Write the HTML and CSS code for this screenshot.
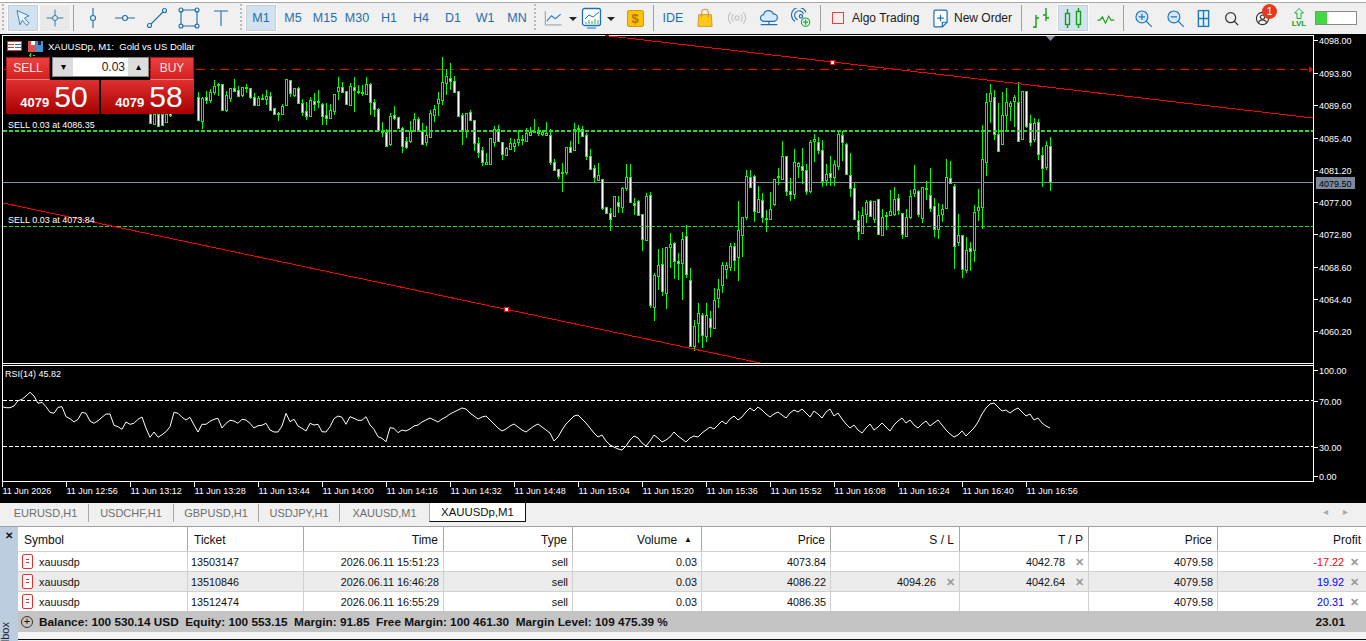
FILE: index.html
```html
<!DOCTYPE html>
<html lang="en">

<head>
    <meta charset="UTF-8">
    <title>XAUUSDp,M1 - MetaTrader 5</title>
    <link rel="stylesheet" href="styles.css">
</head>

<body>
    <!-- Top toolbar -->
    <div class="toolbar">
        <div class="grip grip-first"></div>
        <div class="tool on"><svg width="18" height="18" viewBox="0 0 24 24" class="ic"><path d="M4 2l16 7-6 3 6 7-3 3-6-7-3 6z" fill="#eaf2fa"/></svg></div>
        <div class="tool soft"><svg width="20" height="20" viewBox="0 0 24 24" class="ic"><path d="M12 2v7M12 15v7M2 12h7M15 12h7"/><circle cx="12" cy="12" r="3"/></svg></div>
        <div class="sep"></div>
        <div class="tool"><svg width="24" height="24" viewBox="0 0 24 24" class="ic"><path d="M12 2v7M12 15v7"/><circle cx="12" cy="12" r="2.5"/></svg></div>
        <div class="tool"><svg width="24" height="24" viewBox="0 0 24 24" class="ic"><path d="M2 12h7M15 12h7"/><circle cx="12" cy="12" r="2.5"/></svg></div>
        <div class="tool"><svg width="24" height="24" viewBox="0 0 24 24" class="ic"><path d="M6 18L18 6"/><circle cx="4.5" cy="19.500" r="2"/><circle cx="19.500" cy="4.500" r="2"/></svg></div>
        <div class="tool"><svg width="24" height="24" viewBox="0 0 24 24" class="ic"><path d="M5 4h14M5 20h14M4 5v14M20 5v14"/><circle cx="4" cy="4" r="2"/><circle cx="20" cy="4" r="2"/><circle cx="4" cy="20" r="2"/><circle cx="20" cy="20" r="2"/></svg></div>
        <div class="tool"><svg width="24" height="24" viewBox="0 0 24 24" class="ic"><path d="M5 5h14M12 5v15"/></svg></div>
        <div class="grip"></div>
        <div class="tool tf on">M1</div>
        <div class="tool tf">M5</div>
        <div class="tool tf">M15</div>
        <div class="tool tf">M30</div>
        <div class="tool tf">H1</div>
        <div class="tool tf">H4</div>
        <div class="tool tf">D1</div>
        <div class="tool tf">W1</div>
        <div class="tool tf">MN</div>
        <div class="grip grip-tf"></div>
        <div class="tool"><svg width="20" height="20" viewBox="0 0 26 24" fill="none"><path d="M3 3v18h21" stroke="#8d9aa8" stroke-width="1.300"/><path d="M5 16l6-7 5 4 7-6" stroke="#2f7fc0" stroke-width="1.500"/></svg></div>
        <div class="caret"></div>
        <div class="tool tool-narrow"><svg width="24" height="24" viewBox="0 0 24 24" fill="none"><rect x="2.500" y="2.500" width="18" height="17" rx="2" stroke="#1f6fb0" stroke-width="1.300" fill="#fff"/><path d="M5 13l4-4 4 2 6-5" stroke="#1f6fb0"/><path d="M6 16v2M9 14v4M12 15v3M15 13v5M18 14v4" stroke="#22b14c"/><path d="M7 22h9" stroke="#1f6fb0"/></svg></div>
        <div class="caret"></div>
        <div class="tool tool-gold"><div class="coin">$</div></div>
        <div class="sep"></div>
        <div class="tool tf">IDE</div>
        <div class="tool"><svg width="20" height="20" viewBox="0 0 24 24"><path d="M4.500 8h15l1 14h-17z" fill="#ffc916" stroke="#d9952a" stroke-width="1.200"/><path d="M8 11V5.500a4 4 0 0 1 8 0V11" fill="none" stroke="#d9952a" stroke-width="1.300"/></svg></div>
        <div class="tool"><svg width="20" height="20" viewBox="0 0 24 24" fill="none" stroke="#c4c4c4" stroke-width="1.400"><circle cx="12" cy="12" r="2.500"/><path d="M7.500 7.500a6.500 6.500 0 0 0 0 9M16.500 7.500a6.500 6.500 0 0 1 0 9M4.500 5a10 10 0 0 0 0 14M19.500 5a10 10 0 0 1 0 14"/></svg></div>
        <div class="tool"><svg width="20" height="20" viewBox="0 0 24 24" fill="#d6e9f8" stroke="#1f6fb0" stroke-width="1.400"><path d="M6 16a4 4 0 0 1-.5-8 6 6 0 0 1 11.500-1 4.500 4.500 0 0 1 1 9z"/><path d="M12 16v4M2 20h20" fill="none"/></svg></div>
        <div class="tool"><svg width="20" height="20" viewBox="0 0 24 24" fill="none" stroke="#1f6fb0" stroke-width="1.400"><path d="M5 16a9 9 0 1 1 13-11"/><path d="M8 14a5.500 5.500 0 1 1 7-7"/><circle cx="12" cy="10" r="2"/><circle cx="17.500" cy="17" r="5" fill="#e4f7e8" stroke="#1fa64a"/><path d="M17.500 14v6M14.500 17h6" stroke="#1fa64a"/></svg></div>
        <div class="sep sep-algo"></div>
        <div class="tb-label algo"><span class="algo-box"></span>Algo Trading</div>
        <div class="tb-label order"><svg width="15" height="19" viewBox="0 0 16 20" fill="#fff" stroke="#1f6fb0" stroke-width="1.300"><path d="M2.500 1h11a1.500 1.500 0 0 1 1.500 1.500V14l-5 5H2.500A1.500 1.500 0 0 1 1 17.500v-15A1.500 1.500 0 0 1 2.500 1z"/><path d="M8 6v7M4.500 9.500h7M10 19v-5h5" fill="none"/></svg>New Order</div>
        <div class="sep"></div>
        <div class="tool"><svg width="24" height="24" viewBox="0 0 24 24" class="ic-green"><path d="M7 9v13M4 21h3M7 12h3M17 2v13M14 9h3M17 12h3"/></svg></div>
        <div class="tool on"><svg width="24" height="24" viewBox="0 0 24 24" class="ic-green"><rect x="4.500" y="7.500" width="4" height="11"/><rect x="15.500" y="5.500" width="4" height="13"/><path d="M6.500 3v4M6.500 18v4M17.500 2v3M17.500 18v4"/></svg></div>
        <div class="tool"><svg width="19" height="19" viewBox="0 0 24 24" class="ic-green"><path d="M2 14h3l3-4 4 8 4-9 3 5h4"/></svg></div>
        <div class="sep"></div>
        <div class="tool"><svg width="19" height="19" viewBox="0 0 24 24" class="ic ic-lens"><circle cx="10" cy="10" r="7.500" fill="#d6e9f8"/><path d="M15.500 15.500l7 7M10 6v8M6 10h8"/></svg></div>
        <div class="tool"><svg width="19" height="19" viewBox="0 0 24 24" class="ic ic-lens"><circle cx="10" cy="10" r="7.500" fill="#d6e9f8"/><path d="M15.500 15.500l7 7M6 10h8"/></svg></div>
        <div class="tool tool-tile"><svg width="13" height="19" viewBox="0 0 14 20" class="ic ic-lens"><rect x="1.500" y="1.500" width="11" height="17" fill="#eaf2fa"/><path d="M7 2v16M2 10h10"/></svg></div>
        <div class="tool"><svg width="15" height="15" viewBox="0 0 18 18" fill="none" stroke="#333" stroke-width="1.500"><circle cx="8" cy="8" r="6"/><path d="M12 12l5 5"/></svg></div>
        <div class="tool tool-user"><svg width="15" height="15" viewBox="0 0 16 16" fill="none" stroke="#333" stroke-width="1.200"><circle cx="8" cy="8" r="6.500"/><circle cx="8" cy="6.500" r="2.300"/><path d="M3.500 13c.8-2.500 2.500-3.500 4.500-3.500s3.700 1 4.500 3.500"/></svg><span class="badge">1</span></div>
        <div class="tool lvl"><svg width="10" height="11" viewBox="0 0 10 11"><path d="M5 .5L9.500 5H7v5.500H3V5H.5z" fill="#eafbe8" stroke="#1fa64a"/></svg><span>LVL</span></div>
        <div class="meter"><div class="meter-fill"></div></div>
    </div>

    <!-- Chart, drawn by chart.js -->
    <div class="chart">
        <svg id="chartSvg" class="chart-svg" width="1366" height="469" viewBox="0 34 1366 469"></svg>

        <div class="one-click">
            <div class="oc-top">
                <div class="oc-btn">SELL</div>
                <div class="oc-lot">
                    <div class="oc-step">&#9662;</div>
                    <div class="oc-value">0.03</div>
                    <div class="oc-step">&#9652;</div>
                </div>
                <div class="oc-btn oc-buy">BUY</div>
            </div>
            <div class="oc-prices">
                <div class="oc-price"><span class="oc-big">4079</span><span class="oc-huge">50</span></div>
                <div class="oc-price"><span class="oc-big">4079</span><span class="oc-huge">58</span></div>
            </div>
        </div>
    </div>

    <!-- Chart tabs -->
    <div class="tabs">
        <div class="tab tab-first">EURUSD,H1</div>
        <div class="tab">USDCHF,H1</div>
        <div class="tab">GBPUSD,H1</div>
        <div class="tab tab-jpy">USDJPY,H1</div>
        <div class="tab tab-last">XAUUSD,M1</div>
        <div class="tab active">XAUUSDp,M1</div>
        <div class="tab-arrows"><span>&#9666;</span><span>&#9656;</span></div>
    </div>

    <!-- Toolbox -->
    <div class="toolbox">
        <div class="side">
            <div class="side-x">&#10005;</div>
            <div class="side-name">Toolbox</div>
        </div>
        <div class="trade">
            <table class="orders">
                <colgroup>
                    <col class="c-symbol"><col class="c-ticket"><col class="c-time"><col class="c-num"><col class="c-num"><col class="c-num"><col class="c-num"><col class="c-num"><col class="c-num"><col>
                </colgroup>
                <thead>
                    <tr>
                        <th class="left">Symbol</th>
                        <th class="left">Ticket</th>
                        <th>Time</th>
                        <th>Type</th>
                        <th class="vol">Volume<span class="sort">&#9650;</span></th>
                        <th>Price</th>
                        <th>S / L</th>
                        <th>T / P</th>
                        <th>Price</th>
                        <th>Profit</th>
                    </tr>
                </thead>
                <tbody>
                    <tr>
                        <td class="sym"><span class="doc"></span>xauusdp</td>
                        <td class="left">13503147</td>
                        <td>2026.06.11 15:51:23</td>
                        <td>sell</td>
                        <td>0.03</td>
                        <td>4073.84</td>
                        <td></td>
                        <td class="has-x">4042.78<span class="x">&#10005;</span></td>
                        <td>4079.58</td>
                        <td class="has-x loss">-17.22<span class="x">&#10005;</span></td>
                    </tr>
                    <tr class="alt">
                        <td class="sym"><span class="doc"></span>xauusdp</td>
                        <td class="left">13510846</td>
                        <td>2026.06.11 16:46:28</td>
                        <td>sell</td>
                        <td>0.03</td>
                        <td>4086.22</td>
                        <td class="has-x">4094.26<span class="x">&#10005;</span></td>
                        <td class="has-x">4042.64<span class="x">&#10005;</span></td>
                        <td>4079.58</td>
                        <td class="has-x gain">19.92<span class="x">&#10005;</span></td>
                    </tr>
                    <tr>
                        <td class="sym"><span class="doc"></span>xauusdp</td>
                        <td class="left">13512474</td>
                        <td>2026.06.11 16:55:29</td>
                        <td>sell</td>
                        <td>0.03</td>
                        <td>4086.35</td>
                        <td></td>
                        <td></td>
                        <td>4079.58</td>
                        <td class="has-x gain">20.31<span class="x">&#10005;</span></td>
                    </tr>
                </tbody>
            </table>
            <div class="summary">
                <span class="plus">+</span>
                <span class="summary-text">Balance: 100 530.14 USD&nbsp; Equity: 100 553.15&nbsp; Margin: 91.85&nbsp; Free Margin: 100 461.30&nbsp; Margin Level: 109 475.39 %</span>
                <span class="summary-total">23.01</span>
            </div>
        </div>
    </div>

    <script src="chart.js"></script>
</body>

</html>
```

FILE: styles.css
```css
* {
    margin: 0;
    padding: 0;
    box-sizing: border-box;
    font-family: 'Liberation Sans', Arial, sans-serif;
}

body {
    width: 1366px;
    height: 641px;
    overflow: hidden;
    background: #f0f0f0;
}

.toolbar {
    display: flex;
    align-items: center;
    height: 34px;
    padding: 3px 0 1px 2px;
    background: linear-gradient(#fff 0, #fff 2px, #a8a8a8 2px, #a8a8a8 3px, #f0f0f0 3px);
}

.tool {
    display: flex;
    align-items: center;
    justify-content: center;
    flex: none;
    width: 32px;
    height: 28px;
}

.tool.on {
    background: #d2e2f1;
    border: 1px solid #fff;
    outline: 1px solid #c6ced6;
    outline-offset: -2px;
}

.tool.soft {
    background: #e9e9e9;
    border: 1px solid #f7f7f7;
}

.tool-narrow {
    width: 30px;
}

.tool-gold {
    margin-left: 4px;
}

.tool-tile {
    width: 24px;
}

.tool-user {
    position: relative;
    margin-left: -1px;
}

.ic {
    fill: none;
    stroke: #1f6fa8;
    stroke-width: 1.100;
}

.ic-lens {
    stroke: #1f78b8;
    stroke-width: 1.500;
}

.ic-green {
    fill: none;
    stroke: #12a012;
    stroke-width: 1.400;
}

.tf {
    font-size: 12.500px;
    color: #1f6fa8;
}

.sep {
    flex: none;
    width: 1px;
    height: 26px;
    margin: 0 3px 0 2px;
    background: #a0a0a0;
}

.sep-algo {
    margin: 0 11px 0 3px;
}

.grip {
    flex: none;
    width: 2px;
    height: 28px;
    margin: 0 3px;
    background: repeating-linear-gradient(#bbb 0, #bbb 2px, transparent 2px, transparent 4px);
}

.grip-first {
    margin: 0 3px 0 0;
}

.grip-tf {
    margin: 0 1px 0 1px;
}

.caret {
    flex: none;
    width: 0;
    height: 0;
    margin: 2px 0 0 0;
    border-left: 4px solid transparent;
    border-right: 4px solid transparent;
    border-top: 4px solid #222;
}

.caret + .tool-narrow {
    margin-left: 0;
}

.coin {
    width: 17px;
    height: 17px;
    border: 1px solid #d79a00;
    border-radius: 2px;
    background: #ffc107;
    color: #a87400;
    font-size: 13px;
    font-weight: bold;
    line-height: 15px;
    text-align: center;
}

.tb-label {
    display: flex;
    align-items: center;
    flex: none;
    font-size: 12px;
    color: #1a1a1a;
}

.algo {
    gap: 8px;
    width: 101px;
}

.algo-box {
    width: 12px;
    height: 12px;
    border: 1px solid #d84a4a;
    background: #fdeaea;
}

.order {
    gap: 6px;
    width: 86px;
}

.badge {
    position: absolute;
    left: 16px;
    top: 0;
    width: 15px;
    height: 15px;
    border-radius: 50%;
    background: #e8391f;
    color: #fff;
    font-size: 11px;
    line-height: 15px;
    text-align: center;
}

.lvl {
    flex-direction: column;
    margin-left: 5px;
    color: #12a012;
    font-size: 8px;
    font-weight: bold;
    line-height: 9px;
}

.meter {
    flex: none;
    width: 42px;
    height: 14px;
    border: 1px solid #8a8a8a;
    background: #fff;
}

.meter-fill {
    width: 11px;
    height: 100%;
    background: #41d841;
}

.chart {
    position: relative;
    height: 469px;
    background: #000;
}

.chart-svg {
    display: block;
}

.chart-svg text {
    font-size: 9px;
    fill: #fff;
}

.chart-svg .chart-title {
    font-size: 9.500px;
}

.one-click {
    position: absolute;
    left: 6px;
    top: 23px;
    width: 188px;
}

.oc-top {
    display: flex;
    align-items: flex-start;
    height: 23px;
}

.oc-btn {
    width: 44px;
    height: 23px;
    border: 1px solid #b01010;
    border-bottom: 1px solid #f08080;
    background: linear-gradient(#ec4040, #d62020);
    color: #ffe6e6;
    font-size: 12px;
    line-height: 21px;
    text-align: center;
}

.oc-buy {
    width: 44px;
}

.oc-lot {
    display: flex;
    width: 97px;
    height: 20px;
    margin: 0 1px 0 2px;
    border: 1px solid #888;
    background: #fff;
}

.oc-step {
    width: 20px;
    background: #dcdcdc;
    font-size: 10px;
    line-height: 18px;
    text-align: center;
}

.oc-value {
    flex: 1;
    padding-right: 3px;
    font-size: 12px;
    line-height: 18px;
    text-align: right;
    color: #222;
}

.oc-prices {
    display: flex;
    gap: 2px;
}

.oc-price {
    display: flex;
    align-items: baseline;
    justify-content: center;
    gap: 5px;
    flex: 1;
    height: 34px;
    padding-left: 3px;
    background: linear-gradient(#e03030, #a80000);
    color: #fff;
}

.oc-big {
    font-size: 13px;
    font-weight: bold;
}

.oc-huge {
    font-size: 30px;
    line-height: 33px;
}

.tabs {
    display: flex;
    align-items: flex-start;
    height: 24px;
    padding-left: 3px;
    border-bottom: 1px solid #a0a0a0;
    font-size: 11px;
    color: #6e6e6e;
}

.tab {
    width: 85px;
    height: 18px;
    margin-top: 1px;
    border-right: 1px solid #a8a8a8;
    line-height: 18px;
    text-align: center;
}

.tab-first {
    width: 86px;
}

.tab-jpy {
    width: 81px;
}

.tab-last {
    width: 89px;
    border-right: none;
}

.active {
    width: 97px;
    height: 19px;
    margin-top: 0;
    border: 1px solid #111;
    border-top: none;
    border-left: 1px solid #aaa;
    background: #fff;
    color: #111;
    font-size: 11.400px;
}

.tab-arrows {
    display: flex;
    gap: 15px;
    margin: 3px 0 0 797px;
    font-size: 10px;
    color: #aaa;
}

.toolbox {
    display: flex;
    height: 114px;
}

.side {
    display: flex;
    flex-direction: column;
    justify-content: space-between;
    flex: none;
    width: 18px;
    background: #bccde0;
    overflow: hidden;
}

.side-x {
    padding-top: 3px;
    font-size: 10px;
    font-weight: bold;
    text-align: center;
    color: #111;
}

.side-name {
    height: 18px;
    margin-bottom: -19px;
    font-size: 11px;
    line-height: 10px;
    color: #222;
    writing-mode: vertical-rl;
    transform: rotate(180deg);
    white-space: nowrap;
}

.trade {
    flex: 1;
    border-bottom: 1px solid #111;
    height: 113px;
    background: #f4f4f4;
}

.orders {
    width: 1348px;
    border-collapse: separate;
    border-spacing: 0;
    table-layout: fixed;
    background: #fff;
    font-size: 10.800px;
    color: #111;
}

.c-symbol {
    width: 170px;
}

.c-ticket {
    width: 116px;
}

.c-time {
    width: 140px;
}

.c-num {
    width: 129px;
}

.orders th {
    height: 24px;
    padding: 2px 5px 0;
    border-right: 1px solid #a8a8a8;
    font-size: 12px;
    font-weight: normal;
    text-align: right;
}

.orders td {
    height: 20px;
    padding: 0 4px;
    border-top: 1px solid #d0d0d0;
    border-right: 1px solid #d0d0d0;
    text-align: right;
    white-space: nowrap;
}

.orders th:last-child,
.orders td:last-child {
    border-right: none;
}

.orders .left {
    text-align: left;
    padding-left: 6px;
}

.orders td.left {
    padding-left: 3px;
}

.orders .vol {
    padding-right: 9px;
}

.sort {
    margin-left: 7px;
    font-size: 8px;
    vertical-align: 2px;
}

.alt td {
    background: #ebebeb;
}

.sym {
    display: flex;
    align-items: center;
    gap: 6px;
}

.orders td.sym {
    text-align: left;
    padding-left: 4px;
    border-right: none;
    box-shadow: inset -1px 0 #d0d0d0;
}

.doc {
    width: 11px;
    height: 15px;
    border: 1px solid #e03030;
    border-radius: 2px;
    background: linear-gradient(#e03030, #e03030) center 4px / 3px 1px no-repeat, linear-gradient(#e03030, #e03030) center 7px / 3px 1px no-repeat, #fff;
}

.x {
    display: inline-block;
    width: 19px;
    font-size: 10.500px;
    font-weight: bold;
    color: #999;
    text-align: right;
}

.orders td.has-x {
    padding-right: 4px;
}

.orders td.has-x:last-child {
    padding-right: 7px;
}

.has-x:last-child .x {
    width: 15px;
}

.loss {
    color: #ff0000;
}

.gain {
    color: #0000ff;
}

.summary {
    display: flex;
    align-items: center;
    height: 21px;
    padding-left: 3px;
    background: #c4c4c4;
    font-size: 11.800px;
    font-weight: bold;
    color: #111;
}

.plus {
    width: 12px;
    height: 12px;
    margin-right: 6px;
    border: 1px solid #333;
    border-radius: 50%;
    font-size: 11px;
    font-weight: normal;
    line-height: 9px;
    text-align: center;
}

.summary-text {
    flex: 1;
}

.summary-total {
    padding-right: 21px;
}
```

FILE: chart.js
```js
// Candles are read off the chart at 3x, hence the "/ 3" below.
// Each row: body top, body bottom, wick high, wick low, 1 = bear (white body)
const segments = [
    { x: 150, y: 85, rows: [
        [87, 115, 84, 118, 1], [87, 117, 84, 118, 0], [87, 123, 84, 123, 1], [87, 120, 84, 120, 1], [87, 110, 84, 115, 0], [84, 90, 84, 96, 1]
    ] },
    { x: 198, y: 50, rows: [
        [140, 210, 125, 210, 1],
        [145, 212, 142, 238, 0], [142, 150, 123, 162, 1], [127, 149, 118, 160, 0], [109, 127, 90, 135, 0], [102, 104, 98, 138, 0],
        [103, 180, 102, 183, 1], [136, 180, 124, 185, 0], [115, 143, 115, 155, 0], [115, 122, 87, 125, 1], [121, 137, 108, 138, 1],
        [112, 135, 110, 140, 0], [112, 115, 102, 128, 0], [115, 140, 113, 146, 1], [142, 164, 130, 165, 1], [145, 165, 139, 168, 0],
        [145, 147, 133, 150, 0], [139, 146, 120, 165, 0], [137, 179, 125, 182, 1], [175, 193, 175, 195, 1], [190, 193, 186, 213, 0],
        [169, 191, 163, 192, 0], [88, 164, 87, 167, 0], [91, 130, 90, 141, 1], [115, 134, 114, 141, 0], [115, 160, 112, 162, 1],
        [160, 185, 148, 198, 1], [184, 197, 155, 210, 1], [151, 197, 142, 197, 0], [154, 161, 129, 183, 1], [154, 157, 120, 174, 0],
        [162, 199, 160, 225, 1], [194, 203, 159, 225, 1], [181, 203, 163, 203, 0], [133, 183, 133, 195, 0], [112, 124, 82, 150, 0],
        [112, 125, 96, 128, 1], [124, 161, 124, 164, 1], [109, 164, 100, 165, 0], [110, 121, 82, 185, 1], [122, 127, 106, 131, 1],
        [127, 130, 105, 137, 0], [103, 131, 82, 132, 0], [103, 155, 100, 194, 1], [157, 176, 148, 201, 1], [177, 240, 175, 245, 1],
        [243, 247, 217, 262, 0], [246, 288, 238, 291, 1], [199, 282, 190, 288, 0], [196, 203, 168, 210, 1], [202, 233, 200, 238, 1],
        [233, 287, 232, 308, 1], [274, 290, 262, 297, 1], [243, 272, 213, 280, 0], [208, 243, 190, 245, 0], [208, 242, 202, 245, 1],
        [243, 281, 220, 282, 1], [256, 275, 228, 288, 0], [190, 261, 180, 264, 0], [177, 194, 165, 216, 0], [148, 158, 126, 198, 0],
        [97, 149, 22, 165, 0], [79, 100, 57, 135, 0], [85, 93, 40, 120, 1], [92, 126, 79, 129, 1], [124, 198, 124, 201, 1],
        [196, 242, 190, 285, 1], [190, 242, 190, 263, 0], [187, 211, 181, 213, 1], [211, 278, 210, 303, 1], [280, 307, 262, 323, 1],
        [301, 335, 292, 348, 1], [337, 341, 309, 342, 0], [265, 341, 265, 342, 0], [238, 275, 228, 290, 0], [238, 274, 226, 276, 1],
        [277, 311, 277, 330, 1], [294, 316, 292, 319, 0], [280, 296, 265, 298, 0], [280, 287, 266, 306, 0], [268, 277, 241, 288, 0],
        [267, 269, 255, 284, 0], [250, 272, 235, 275, 0], [247, 255, 232, 258, 0], [243, 245, 208, 248, 0], [245, 246, 232, 258, 0],
        [246, 252, 240, 258, 0], [249, 254, 216, 255, 0], [254, 335, 237, 345, 1], [337, 359, 327, 362, 1], [358, 377, 357, 388, 1],
        [366, 370, 340, 426, 0], [292, 365, 292, 375, 0], [292, 305, 274, 306, 1], [238, 299, 219, 300, 0], [234, 238, 226, 282, 0],
        [236, 257, 228, 262, 1], [256, 317, 249, 330, 1], [319, 356, 296, 360, 1], [355, 381, 345, 398, 1], [376, 390, 338, 391, 0]
    ] },
    { x: 602, y: 100, rows: [
        [238, 323, 237, 329, 1], [322, 338, 322, 342, 1], [338, 356, 324, 392, 1], [289, 349, 287, 350, 0], [305, 319, 289, 338, 1],
        [265, 322, 262, 338, 0], [232, 265, 193, 272, 0], [230, 307, 193, 308, 1], [308, 316, 295, 345, 1], [304, 346, 301, 347, 1],
        [341, 418, 341, 453, 1], [287, 421, 278, 421, 0], [284, 616, 277, 623, 1], [526, 620, 520, 662, 0], [494, 529, 447, 570, 0],
        [491, 574, 444, 587, 1], [442, 580, 442, 627, 0], [431, 440, 400, 504, 0], [430, 482, 426, 537, 1], [482, 490, 460, 540, 1],
        [416, 490, 397, 600, 0], [407, 521, 376, 534, 1], [539, 737, 504, 738, 1], [677, 737, 660, 753, 0], [638, 670, 610, 728, 0],
        [644, 706, 640, 744, 1], [644, 707, 610, 725, 0], [653, 682, 633, 710, 1], [599, 685, 564, 685, 0], [566, 595, 538, 625, 0],
        [496, 556, 487, 578, 0], [494, 508, 487, 536, 0], [439, 502, 430, 514, 0], [439, 481, 430, 513, 1], [391, 472, 304, 543, 0],
        [352, 406, 352, 470, 0], [227, 352, 210, 360, 0], [230, 262, 210, 264, 1], [227, 334, 225, 366, 1], [298, 335, 258, 340, 0],
        [299, 352, 279, 369, 1], [354, 356, 331, 396, 0], [326, 356, 276, 356, 0], [238, 311, 238, 318, 0], [229, 232, 204, 255, 0],
        [169, 237, 123, 240, 0], [169, 272, 168, 287, 1], [272, 283, 234, 303, 1], [187, 283, 148, 298, 0], [190, 197, 185, 234, 0],
        [197, 211, 144, 251, 1], [211, 272, 193, 285, 1], [127, 272, 120, 279, 0], [118, 124, 102, 186, 0], [127, 149, 112, 162, 1],
        [149, 242, 121, 261, 1], [223, 239, 193, 258, 0], [218, 232, 168, 258, 1], [193, 232, 180, 258, 0], [103, 197, 90, 209, 0],
        [106, 127, 93, 183, 1], [131, 223, 130, 224, 1], [226, 265, 160, 291, 1], [265, 356, 250, 358, 1], [359, 394, 334, 419, 1],
        [344, 398, 322, 398, 0], [307, 343, 300, 369, 0], [302, 349, 300, 350, 1], [304, 356, 304, 370, 0], [298, 401, 298, 401, 1],
        [352, 404, 328, 404, 0], [344, 349, 335, 390, 0], [334, 344, 270, 346, 0], [298, 341, 262, 349, 0], [295, 331, 282, 345, 1]
    ] },
    { x: 902, y: 140, rows: [
        [220, 283, 220, 296, 1], [232, 287, 207, 287, 0], [168, 232, 150, 238, 0], [148, 160, 75, 170, 0], [152, 223, 150, 231, 1],
        [142, 235, 142, 248, 0], [145, 147, 123, 180, 0], [166, 205, 84, 215, 1], [199, 268, 175, 290, 1], [226, 266, 189, 298, 0],
        [207, 223, 192, 246, 0], [112, 205, 57, 205, 0], [115, 130, 63, 131, 1]
    ] },
    { x: 954, y: 80, rows: [
        [318, 499, 312, 566, 1], [465, 485, 402, 498, 0], [466, 566, 466, 594, 1], [511, 569, 470, 579, 0], [505, 512, 486, 572, 1],
        [397, 509, 376, 545, 0], [382, 389, 327, 423, 0], [238, 380, 135, 446, 0], [67, 245, 39, 288, 0], [40, 62, 12, 129, 0],
        [52, 163, 30, 180, 1], [163, 212, 69, 213, 1], [106, 191, 36, 191, 0], [67, 104, 24, 157, 0], [70, 77, 63, 124, 0],
        [52, 62, 45, 141, 0], [65, 182, 7, 185, 1], [34, 176, 34, 177, 0], [34, 137, 34, 144, 1], [130, 185, 106, 198, 1],
        [130, 178, 114, 187, 0], [127, 223, 118, 240, 1], [224, 265, 202, 321, 1], [196, 260, 183, 269, 0], [199, 307, 171, 333, 1]
    ] }
];

// RSI: first part read at 3x from y = 360, the rest in page pixels
const rsiHead = [140, 143, 143, 138, 122, 118, 108, 97, 108, 130, 127, 140, 157, 160, 142, 140, 170, 176, 186, 178,
    157, 160, 183, 190, 182, 172, 162, 162, 196, 200, 208, 186, 193, 190, 178, 171, 205, 232, 216, 232,
    224, 215, 200, 157, 160, 172, 180, 172, 195, 216, 193, 193, 184, 178, 175, 204, 190, 181, 183, 190,
    178, 180, 190, 204, 197, 196, 190, 210, 216, 216, 198, 160, 185, 178, 198, 205, 213, 190, 195, 193,
    215, 216, 200, 176, 168, 172, 193, 170, 175, 181, 181, 170, 195, 208, 230, 235, 245, 203, 205, 218].map(v => 360 + v / 3);
const rsiTail = [430, 431, 429, 426, 425, 422, 420, 418, 420, 422, 419, 417, 414, 412, 410, 408, 409, 413, 416, 419,
    417, 416, 420, 424, 428, 431, 429, 426, 424, 427, 430, 432, 429, 426, 424, 427, 430, 433, 441, 437,
    430, 424, 420, 416, 415, 419, 423, 428, 433, 437, 435, 441, 445, 447, 449, 450, 446, 440, 436, 438,
    443, 446, 441, 435, 438, 442, 440, 437, 432, 436, 439, 442, 438, 436, 437, 433, 430, 427, 429, 425,
    421, 424, 419, 416, 420, 417, 412, 408, 411, 407, 410, 414, 417, 414, 412, 415, 418, 413, 410, 412,
    409, 413, 417, 411, 414, 418, 412, 409, 416, 413, 419, 424, 428, 425, 430, 433, 428, 424, 430, 427,
    423, 427, 431, 425, 421, 418, 423, 420, 425, 428, 424, 421, 426, 423, 420, 425, 430, 434, 437, 435,
    431, 436, 432, 428, 422, 414, 408, 404, 403, 407, 411, 410, 413, 410, 408, 412, 416, 414, 420, 418,
    423, 426, 428];

const prices = [[40, '4098.00'], [73, '4093.80'], [105, '4089.60'], [138, '4085.40'], [170, '4081.20'], [202, '4077.00'],
    [234, '4072.80'], [267, '4068.60'], [299, '4064.40'], [331, '4060.20'],
    [370, '100.00'], [401, '70.00'], [447, '30.00'], [476, '0.00']];
const times = ['11 Jun 2026', '11 Jun 12:56', '11 Jun 13:12', '11 Jun 13:28', '11 Jun 13:44', '11 Jun 14:00', '11 Jun 14:16',
    '11 Jun 14:32', '11 Jun 14:48', '11 Jun 15:04', '11 Jun 15:20', '11 Jun 15:36', '11 Jun 15:52', '11 Jun 16:08',
    '11 Jun 16:24', '11 Jun 16:40', '11 Jun 16:56'];

const GREEN = '#00ff00';
const svg = document.getElementById('chartSvg');

function add(tag, attrs, text) {
    const el = document.createElementNS('http://www.w3.org/2000/svg', tag);
    for (const key in attrs) el.setAttribute(key, attrs[key]);
    if (text) el.textContent = text;
    svg.appendChild(el);
    return el;
}

function line(x1, y1, x2, y2, stroke, extra) {
    return add('line', Object.assign({ x1, y1, x2, y2, stroke, 'shape-rendering': 'crispEdges' }, extra));
}

// frame
line(2.5, 35.5, 1313.5, 35.5, '#fff');
line(2.5, 35, 2.5, 482, '#fff');
line(1313.5, 35, 1313.5, 482, '#fff');
line(2, 363.5, 1314, 363.5, '#fff');
line(2, 365.5, 1314, 365.5, '#fff');
line(2, 481.5, 1314, 481.5, '#fff');

// levels under the candles
line(3, 69.5, 1308, 69.5, '#ff0000', { 'stroke-dasharray': '9 6 3 6', 'stroke-dashoffset': 23 });
line(3, 182.5, 1313, 182.5, '#8090a4');

segments.forEach(seg => {
    seg.rows.forEach((r, i) => {
        const x = seg.x + i * 4;
        const top = Math.round(seg.y + r[0] / 3);
        const bot = Math.round(seg.y + r[1] / 3);
        line(x + 0.5, Math.round(seg.y + r[2] / 3), x + 0.5, Math.round(seg.y + r[3] / 3), GREEN);
        add('rect', {
            x: x - 0.5, y: top + 0.5, width: 2, height: Math.max(bot - top, 1),
            fill: r[4] ? '#fff' : '#000', stroke: GREEN, 'shape-rendering': 'crispEdges'
        });
    });
});

// position lines
line(3, 131, 1313, 131, '#2fd62f', { 'stroke-width': 2, 'stroke-dasharray': '4 2' });
line(3, 226.5, 1313, 226.5, '#2fd62f', { 'stroke-dasharray': '4 2' });

// trend lines, their handles and the arrow on the alert line
line(605, 35.5, 1313, 118, '#ff0000');
line(3, 203, 760, 363, '#ff0000');
add('rect', { x: 830.5, y: 60.5, width: 4, height: 4, fill: '#fff', stroke: '#ff0000', 'shape-rendering': 'crispEdges' });
add('rect', { x: 504.5, y: 307.5, width: 4, height: 4, fill: '#fff', stroke: '#ff0000', 'shape-rendering': 'crispEdges' });
add('path', { d: 'M1309 66l4 3.500-4 3.500z', fill: '#ff0000' });
add('path', { d: 'M1046 36h9l-4.500 5z', fill: '#8494a8' });

// RSI
const rsi = rsiHead.concat(rsiTail).map((y, i) => (2 + i * 4) + ',' + y.toFixed(1)).join(' ');
add('polyline', { points: rsi, fill: 'none', stroke: '#fff' });
line(3, 400.5, 1313, 400.5, '#fff', { 'stroke-dasharray': '4 2' });
line(3, 446.5, 1313, 446.5, '#fff', { 'stroke-dasharray': '4 2' });

// price scale
prices.forEach(p => {
    line(1314, p[0] + 0.5, 1318, p[0] + 0.5, '#fff');
    add('text', { x: 1319, y: p[0] + 3.5 }, p[1]);
});
add('rect', { x: 1316, y: 177, width: 39, height: 12, fill: '#7a8a9e' });
add('text', { x: 1319, y: 186.5, style: 'fill:#000' }, '4079.50');

// time scale
times.forEach((t, i) => {
    const x = 2 + i * 64;
    line(x + 0.5, 482, x + 0.5, 487, '#fff');
    add('text', { x: x + 0.5, y: 494 }, t);
});

// text on the chart
add('text', { x: 48, y: 50, class: 'chart-title' }, 'XAUUSDp, M1:\u00a0 Gold vs US Dollar');
add('text', { x: 8, y: 127.5 }, 'SELL 0.03 at 4086.35');
add('text', { x: 8, y: 222.5 }, 'SELL 0.03 at 4073.84');
add('text', { x: 5, y: 377 }, 'RSI(14) 45.82');

// the two small window icons next to the title, and a candle tip above the panel
add('rect', { x: 7.5, y: 41.5, width: 14, height: 9, fill: '#fff', stroke: '#d04040' });
add('path', { d: 'M8 44.500h6M8 47.500h6', stroke: '#d04040', fill: 'none' });
add('path', { d: 'M15 44.500h6M15 47.500h6', stroke: '#3a6fb8', fill: 'none' });
add('rect', { x: 28, y: 41, width: 8, height: 11, fill: '#e05050' });
add('rect', { x: 36, y: 41, width: 7, height: 11, fill: '#4a90d0' });
add('rect', { x: 31, y: 41, width: 4, height: 4, fill: '#fff' });
add('rect', { x: 38, y: 41, width: 3, height: 4, fill: '#123' });
line(30.5, 53, 30.5, 57, GREEN);
line(29, 55.5, 37, 55.5, GREEN, { 'stroke-dasharray': '2 2' });
```
